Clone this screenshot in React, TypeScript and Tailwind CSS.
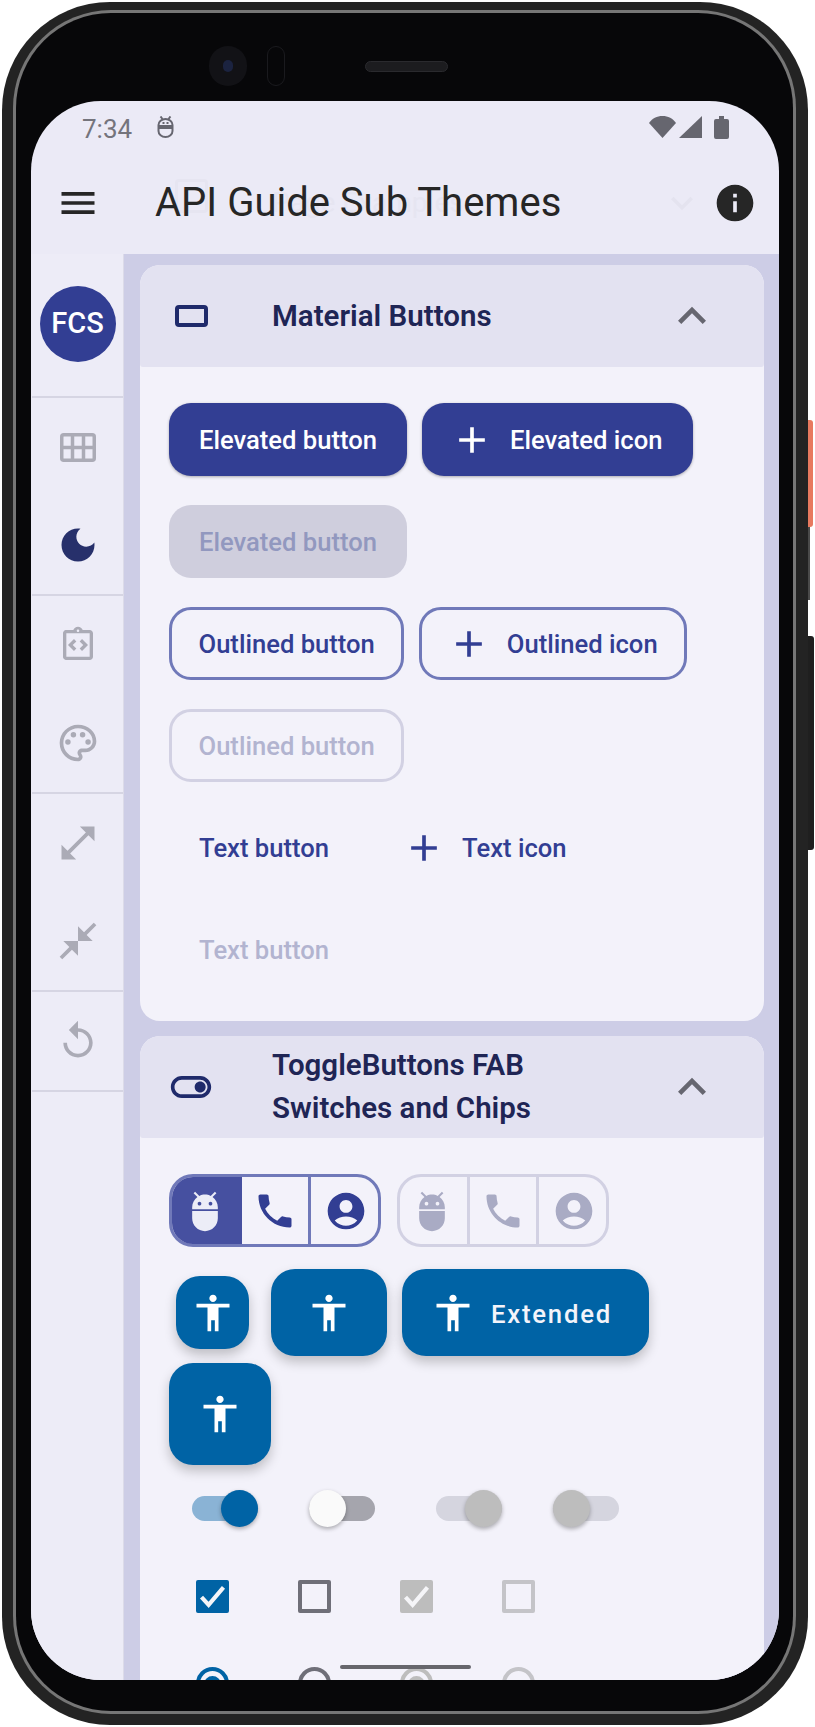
import type { ReactNode } from "react";

const paths = {
  menu: "M3 18h18v-2H3v2zm0-5h18v-2H3v2zm0-7v2h18V6H3z",
  info: "M12 2C6.48 2 2 6.48 2 12s4.48 10 10 10 10-4.48 10-10S17.52 2 12 2zm1 15h-2v-6h2v6zm0-8h-2V7h2v2z",
  moon: "M12 3c-4.97 0-9 4.03-9 9s4.03 9 9 9 9-4.03 9-9c0-.46-.04-.92-.1-1.36-.98 1.37-2.58 2.26-4.4 2.26-2.98 0-5.4-2.42-5.4-5.4 0-1.81.89-3.42 2.26-4.4-.44-.06-.9-.1-1.36-.1z",
  code: "M11 14.17L8.83 12 11 9.83 9.59 8.41 6 12l3.59 3.59zm3.41 1.42L18 12l-3.59-3.59L13 9.83 15.17 12 13 14.17zM19 3h-4.18C14.4 1.84 13.3 1 12 1s-2.4.84-2.82 2H5c-.14 0-.27.01-.4.04-.39.08-.74.28-1.01.55-.18.18-.33.4-.43.64S3 4.72 3 5v14c0 .27.06.54.16.78s.25.45.43.64c.27.27.62.47 1.01.55.13.02.26.03.4.03h14c1.1 0 2-.9 2-2V5c0-1.1-.9-2-2-2zm0 16H5V5h14v14zM12 2.75c.41 0 .75.34.75.75s-.34.75-.75.75-.75-.34-.75-.75.34-.75.75-.75z",
  palette:
    "M12 22C6.49 22 2 17.51 2 12S6.49 2 12 2s10 4.04 10 9c0 3.31-2.69 6-6 6h-1.77c-.28 0-.5.22-.5.5 0 .12.05.23.13.33.41.47.64 1.06.64 1.67 0 1.38-1.12 2.5-2.5 2.5zm0-18c-4.41 0-8 3.59-8 8s3.59 8 8 8c.28 0 .5-.22.5-.5 0-.16-.08-.28-.14-.35-.41-.46-.63-1.05-.63-1.65 0-1.38 1.12-2.5 2.5-2.5H16c2.21 0 4-1.79 4-4 0-3.86-3.59-7-8-7zM5 11.5a1.5 1.5 0 1 0 3 0a1.5 1.5 0 1 0-3 0zM8 7.5a1.5 1.5 0 1 0 3 0a1.5 1.5 0 1 0-3 0zM13 7.5a1.5 1.5 0 1 0 3 0a1.5 1.5 0 1 0-3 0zM16 11.5a1.5 1.5 0 1 0 3 0a1.5 1.5 0 1 0-3 0z",
  expand: "M21 11V3h-8l3.29 3.29-10 10L3 13v8h8l-3.29-3.29 10-10z",
  compress:
    "M22 3.41l-5.29 5.29L20 12h-8V4l3.29 3.29L20.59 2 22 3.41zM3.41 22l5.29-5.29L12 20v-8H4l3.29 3.29L2 20.59 3.41 22z",
  replay:
    "M12 5V1L7 6l5 5V7c3.31 0 6 2.69 6 6s-2.69 6-6 6-6-2.69-6-6H4c0 4.42 3.58 8 8 8s8-3.58 8-8-3.58-8-8-8z",
  toggle:
    "M17 6H7c-3.31 0-6 2.69-6 6s2.69 6 6 6h10c3.31 0 6-2.69 6-6s-2.69-6-6-6zm0 10H7c-2.21 0-4-1.79-4-4s1.79-4 4-4h10c2.21 0 4 1.79 4 4s-1.79 4-4 4zm0-7c-1.66 0-3 1.34-3 3s1.34 3 3 3 3-1.34 3-3-1.34-3-3-3z",
  chevron: "M12 8l-6 6 1.41 1.41L12 10.83l4.59 4.58L18 14z",
  chevronDown: "M16.59 8.59L12 13.17 7.41 8.59 6 10l6 6 6-6z",
  add: "M19 13h-6v6h-2v-6H5v-2h6V5h2v6h6v2z",
  adb: "M5 16c0 3.87 3.13 7 7 7s7-3.13 7-7v-4H5v4zM16.12 4.37l2.1-2.1-.82-.83-2.3 2.31C14.16 3.28 13.12 3 12 3s-2.16.28-3.09.75L6.6 1.44l-.82.83 2.1 2.1C6.14 5.64 5 7.68 5 10v1h14v-1c0-2.32-1.14-4.36-2.88-5.63zM9 9c-.55 0-1-.45-1-1s.45-1 1-1 1 .45 1 1-.45 1-1 1zm6 0c-.55 0-1-.45-1-1s.45-1 1-1 1 .45 1 1-.45 1-1 1z",
  phone:
    "M6.62 10.79c1.44 2.83 3.76 5.14 6.59 6.59l2.2-2.2c.27-.27.67-.36 1.02-.24 1.12.37 2.33.57 3.57.57.55 0 1 .45 1 1V20c0 .55-.45 1-1 1-9.39 0-17-7.61-17-17 0-.55.45-1 1-1h3.5c.55 0 1 .45 1 1 0 1.25.2 2.45.57 3.57.11.35.03.74-.25 1.02l-2.2 2.2z",
  account:
    "M12 2C6.48 2 2 6.48 2 12s4.48 10 10 10 10-4.48 10-10S17.52 2 12 2zm0 4c1.93 0 3.5 1.57 3.5 3.5S13.93 13 12 13s-3.5-1.57-3.5-3.5S10.07 6 12 6zm0 14c-2.03 0-4.43-.82-6.14-2.88C7.55 15.8 9.68 15 12 15s4.45.8 6.14 2.12C16.43 19.18 14.03 20 12 20z",
  accessibility:
    "M12 2c1.1 0 2 .9 2 2s-.9 2-2 2-2-.9-2-2 .9-2 2-2zm9 7h-6v13h-2v-6h-2v6H9V9H3V7h18v2z",
};

function Icon({ d, className }: { d: string; className: string }) {
  return (
    <svg viewBox="0 0 24 24" fill="currentColor" className={`shrink-0 ${className}`}>
      <path d={d} fillRule="evenodd" />
    </svg>
  );
}

function Rail({ children, height }: { children: ReactNode; height: string }) {
  return (
    <div className={`flex flex-col items-center border-b-2 border-[#d6d5e3] text-[#ababb6] ${height}`}>
      {children}
    </div>
  );
}

function Slot({ children }: { children: ReactNode }) {
  return <div className="flex flex-1 items-center justify-center">{children}</div>;
}

function Sidebar() {
  return (
    <div className="flex w-[93px] shrink-0 flex-col border-r border-[#dcdbe9] bg-[#edecf7] pl-px">
      <Rail height="h-[144px]">
        <div className="flex flex-1 items-center pb-[2px]">
          <div className="flex h-[76px] w-[76px] items-center justify-center rounded-full bg-[#323e93] text-[29px] font-medium text-white">
            FCS
          </div>
        </div>
      </Rail>
      <Rail height="h-[198px]">
        <Slot>
          <svg viewBox="0 0 36 29" fill="none" stroke="currentColor" strokeWidth="3.5" className="h-[29px] w-[36px]">
            <rect x="1.75" y="1.75" width="32.5" height="25.5" rx="2" />
            <path d="M12.500 2v25M23.500 2v25M2 14.500h32" />
          </svg>
        </Slot>
        <Slot>
          <Icon d={paths.moon} className="h-[48px] w-[44px] text-[#27306b]" />
        </Slot>
      </Rail>
      <Rail height="h-[198px]">
        <Slot>
          <Icon d={paths.code} className="h-[40px] w-[44px]" />
        </Slot>
        <Slot>
          <Icon d={paths.palette} className="h-[44px] w-[44px]" />
        </Slot>
      </Rail>
      <Rail height="h-[198px]">
        <Slot>
          <Icon d={paths.expand} className="h-[44px] w-[44px]" />
        </Slot>
        <Slot>
          <Icon d={paths.compress} className="h-[44px] w-[44px]" />
        </Slot>
      </Rail>
      <Rail height="h-[100px]">
        <Slot>
          <Icon d={paths.replay} className="h-[44px] w-[44px]" />
        </Slot>
      </Rail>
    </div>
  );
}

function CardHeader({ icon, children }: { icon: ReactNode; children: ReactNode }) {
  return (
    <div className="flex h-[102px] items-center rounded-t-[20px] rounded-b-[3px] bg-[#e3e2f1]">
      <div className="flex w-[102px] justify-center">{icon}</div>
      <div className="ml-[30px] flex-1 text-[29.5px] leading-[43px] font-semibold text-[#1f2555]">
        {children}
      </div>
      <Icon d={paths.chevron} className="mr-[44px] h-[56px] w-[56px] text-[#666670]" />
    </div>
  );
}

type ButtonKind = "elevated" | "elevatedOff" | "outlined" | "outlinedOff" | "text" | "textOff";

const buttonStyles: Record<ButtonKind, string> = {
  elevated: "bg-[#323e93] text-white shadow-[0_1px_3px_rgba(0,0,0,0.3)]",
  elevatedOff: "bg-[#cfcedd] text-[#9298bf]",
  outlined: "border-[3px] border-[#7079b9] text-[#323e93]",
  outlinedOff: "border-[3px] border-[#d2d1e3] text-[#b2b4d0]",
  text: "text-[#323e93]",
  textOff: "text-[#b2b4d0]",
};

function Btn({ kind, label, icon }: { kind: ButtonKind; label: string; icon?: boolean }) {
  const outlined = kind === "outlined" || kind === "outlinedOff";
  let pad = outlined ? "px-[26.5px]" : "px-[30px]";
  if (icon) pad = outlined ? "gap-[16px] pr-[26.5px] pl-[24.5px]" : "gap-[16px] pr-[30px] pl-[28px]";
  return (
    <div className={`flex h-[73px] items-center rounded-[22px] text-[25.6px] font-medium ${pad} ${buttonStyles[kind]}`}>
      {icon ? <Icon d={paths.add} className="h-[44px] w-[44px]" /> : null}
      <span className="mt-[2px]">{label}</span>
    </div>
  );
}

function Toggles({ off }: { off?: boolean }) {
  const line = off ? "border-[#d2d1e3]" : "border-[#7079b9]";
  const color = off ? "text-[#a9abc4]" : "text-[#323e93]";
  return (
    <div className={`flex h-[73px] w-[212px] overflow-hidden rounded-[24px] border-[3px] ${line}`}>
      <div
        className={`flex w-[70px] items-center justify-center pr-[4px] ${
          off ? `border-r-[3px] ${line} text-[#a9abc4]` : "bg-[#4650a0] text-[#ecedf7]"
        }`}
      >
        <Icon d={paths.adb} className="h-[44px] w-[44px]" />
      </div>
      <div className={`flex w-[69px] items-center justify-center border-r-[3px] ${line} ${color}`}>
        <Icon d={paths.phone} className="h-[44px] w-[44px]" />
      </div>
      <div className={`flex flex-1 items-center justify-center pl-[2px] ${color}`}>
        <Icon d={paths.account} className="h-[44px] w-[44px]" />
      </div>
    </div>
  );
}

function Fab({ size, label }: { size: string; label?: string }) {
  return (
    <div
      className={`flex items-center justify-center rounded-[24px] bg-[#0063a5] text-white shadow-[0_6px_12px_rgba(0,0,0,0.22)] ${size}`}
    >
      <Icon d={paths.accessibility} className="h-[44px] w-[44px]" />
      {label ? (
        <span className="mt-[3px] ml-[16px] text-[25.7px] font-medium tracking-[1.75px] text-[#f3f4fa]">{label}</span>
      ) : null}
    </div>
  );
}

function Switch({ on, off, margin }: { on?: boolean; off?: boolean; margin: string }) {
  const track = off ? "bg-[#d5d5df]" : on ? "bg-[#8ab3d5]" : "bg-[#a5a5ad]";
  const thumb = off ? "bg-[#bdbdbd]" : on ? "bg-[#0063a5]" : "bg-[#fafafa]";
  return (
    <div className={`relative h-[37px] w-[66px] ${margin}`}>
      <div className={`mt-[6px] h-[25px] rounded-full ${track}`} />
      <div
        className={`absolute top-0 h-[37px] w-[37px] rounded-full shadow-[0_2px_4px_rgba(0,0,0,0.3)] ${
          on ? "right-0" : "left-0"
        } ${thumb}`}
      />
    </div>
  );
}

function Check({ color, checked }: { color: string; checked?: boolean }) {
  return (
    <div className={`flex h-[33px] w-[33px] items-center justify-center rounded-[2px] border-[4px] ${color}`}>
      {checked ? (
        <svg viewBox="0 0 24 24" fill="none" stroke="#f5f5f8" strokeWidth="3.2" className="h-[31px] w-[31px] shrink-0">
          <path d="M3.500 12.500l5.500 6L20.500 5" />
        </svg>
      ) : null}
    </div>
  );
}

function Radio({ color, dot }: { color: string; dot?: string }) {
  return (
    <div className={`flex h-[36px] w-[33px] items-center justify-center rounded-full border-[4px] ${color}`}>
      {dot ? <div className={`h-[18px] w-[17px] rounded-full ${dot}`} /> : null}
    </div>
  );
}

function Screen() {
  return (
    <div className="relative flex min-h-0 flex-1 flex-col overflow-hidden rounded-[70px] bg-[#ebeaf6]">
      <div className="flex h-[52px] shrink-0 items-center pr-[50px] pl-[51px] text-[#666670]">
        <span className="mt-[4px] text-[26px] text-[#74747c]">7:34</span>
        <svg viewBox="0 0 17 22" fill="none" stroke="currentColor" strokeWidth="2" className="ml-[25px] h-[22px] w-[17px]">
          <path d="M1.500 12v3a7 6 0 0 0 14 0v-3zM1.500 10V9a7 6 0 0 1 14 0v1z" />
          <path d="M3.500 .5l2 2.500M13.500 .5l-2 2.500M5.500 7h2M9.500 7h2" />
        </svg>
        <div className="flex-1" />
        <svg viewBox="0 0 27 22" fill="#66666f" className="h-[22px] w-[27px]">
          <path d="M0 7C3 2.500 8 0 13.500 0S24 2.500 27 7L13.500 22z" />
        </svg>
        <svg viewBox="0 0 23 22" fill="#66666f" className="ml-[3px] h-[22px] w-[23px]">
          <path d="M23 0v22H0z" />
        </svg>
        <svg viewBox="0 0 15 23" fill="#66666f" className="ml-[12px] h-[23px] w-[15px]">
          <path d="M5 0h5v3h3a2 2 0 0 1 2 2v16a2 2 0 0 1-2 2H2a2 2 0 0 1-2-2V5a2 2 0 0 1 2-2h3z" />
        </svg>
      </div>

      <div className="flex h-[101px] shrink-0 items-center pb-[2px] pl-[25px] text-[#262626]">
        <Icon d={paths.menu} className="h-[44px] w-[44px]" />
        <div className="relative ml-[55px] flex-1">
          {/* ghost of the previous page title, mid crossfade */}
          <div className="absolute top-[6px] left-[20px] h-[34px] w-[33px] rounded-[4px] border-[3px] border-[#e6e5f1]" />
          <span className="absolute top-[9px] left-[117px] text-[28px] text-[#e6e5f1]">Page Examples</span>
          <span className="relative text-[40px]">API Guide Sub Themes</span>
        </div>
        <Icon d={paths.chevronDown} className="mr-[-3px] h-[44px] w-[44px] text-[#e4e3ef]" />
        <Icon d={paths.info} className="mr-[22px] ml-[12px] h-[44px] w-[44px]" />
      </div>

      <div className="flex min-h-0 flex-1">
        <Sidebar />
        <div className="flex min-w-0 flex-1 flex-col gap-[15px] bg-[#cdcde6] pt-[11px] pr-[15px] pl-[16px]">
          <div className="shrink-0 rounded-[20px] bg-[#f3f2fa]">
            <CardHeader
              icon={<div className="h-[22px] w-[33px] rounded-[4px] border-[4px] border-[#1f2a6b]" />}
            >
              Material Buttons
            </CardHeader>
            <div className="flex flex-wrap gap-x-[15px] gap-y-[29px] pt-[36px] pr-[20px] pb-[35px] pl-[29px]">
              <Btn kind="elevated" label="Elevated button" />
              <Btn kind="elevated" label="Elevated icon" icon />
              <div className="w-full">
                <div className="w-fit">
                  <Btn kind="elevatedOff" label="Elevated button" />
                </div>
              </div>
              <Btn kind="outlined" label="Outlined button" />
              <Btn kind="outlined" label="Outlined icon" icon />
              <div className="w-full">
                <div className="w-fit">
                  <Btn kind="outlinedOff" label="Outlined button" />
                </div>
              </div>
              <Btn kind="text" label="Text button" />
              <Btn kind="text" label="Text icon" icon />
              <div className="w-full">
                <div className="w-fit">
                  <Btn kind="textOff" label="Text button" />
                </div>
              </div>
            </div>
          </div>

          <div className="shrink-0 rounded-[20px] bg-[#f3f2fa]">
            <CardHeader icon={<Icon d={paths.toggle} className="h-[44px] w-[44px] text-[#1f2a6b]" />}>
              ToggleButtons FAB
              <br />
              Switches and Chips
            </CardHeader>
            <div className="flex flex-col pt-[36px] pb-[40px] pl-[29px]">
              <div className="flex gap-[16px]">
                <Toggles />
                <Toggles off />
              </div>
              <div className="mt-[22px] flex items-center">
                <div className="ml-[7px]">
                  <Fab size="h-[73px] w-[73px]" />
                </div>
                <div className="ml-[22px]">
                  <Fab size="h-[87px] w-[116px]" />
                </div>
                <div className="ml-[15px]">
                  <Fab size="h-[87px] w-[247px] pr-[8px]" label="Extended" />
                </div>
              </div>
              <div className="mt-[7px]">
                <Fab size="h-[102px] w-[102px]" />
              </div>
              <div className="mt-[25px] flex">
                <Switch on margin="ml-[23px]" />
                <Switch margin="ml-[51px]" />
                <Switch on off margin="ml-[61px]" />
                <Switch off margin="ml-[51px]" />
              </div>
              <div className="mt-[53px] ml-[27px] flex gap-[69px]">
                <Check color="border-[#0063a5] bg-[#0063a5]" checked />
                <Check color="border-[#6f6f78]" />
                <Check color="border-[#bdbdbd] bg-[#bdbdbd]" checked />
                <Check color="border-[#c4c4c8]" />
              </div>
              <div className="mt-[54px] ml-[27px] flex gap-[69px]">
                <Radio color="border-[#0063a5]" dot="bg-[#0063a5]" />
                <Radio color="border-[#6f6f78]" />
                <Radio color="border-[#bdbdbd]" dot="bg-[#bdbdbd]" />
                <Radio color="border-[#c4c4c8]" />
              </div>
            </div>
          </div>
        </div>
      </div>

      <div className="absolute bottom-[11px] left-[309px] h-[4px] w-[131px] rounded-full bg-[#66666c]" />
    </div>
  );
}

export default function App() {
  return (
    <div className="relative h-[1727px] w-[815px] overflow-hidden bg-white [font-family:Roboto,sans-serif]">
      {/* side buttons sit behind the frame edge */}
      <div className="absolute top-[420px] left-[805px] h-[107px] w-[8px] rounded-r-[3px] bg-[#e8795f]" />
      <div className="absolute top-[527px] left-[805px] h-[73px] w-[5px] bg-[#4a4a4a]" />
      <div className="absolute top-[636px] left-[805px] h-[214px] w-[9px] rounded-r-[3px] bg-[#1f1f1f]" />

      <div className="relative mt-[2px] ml-[2px] h-[1723px] w-[806px] rounded-[108px] bg-[#232323] pt-[8px] pr-[12px] pb-[11px] pl-[11px]">
        <div className="h-full rounded-[98px] bg-[#767676] p-[3px]">
          <div className="flex h-full flex-col rounded-[95px] bg-[#070709] pr-[14px] pb-[31px] pl-[15px]">
            <div className="flex h-[88px] shrink-0 items-center pt-[18px] pl-[178px]">
              <div className="flex h-[40px] w-[38px] items-center justify-center rounded-full bg-[#121216]">
                <div className="h-[12px] w-[10px] rounded-full bg-[#1b2340]" />
              </div>
              <div className="ml-[20px] h-[40px] w-[18px] rounded-full border border-[#1a1a1e]" />
              <div className="ml-[80px] h-[11px] w-[83px] rounded-full border border-[#2a2a2e] bg-[#1c1c1f]" />
            </div>
            <Screen />
          </div>
        </div>
      </div>
    </div>
  );
}
